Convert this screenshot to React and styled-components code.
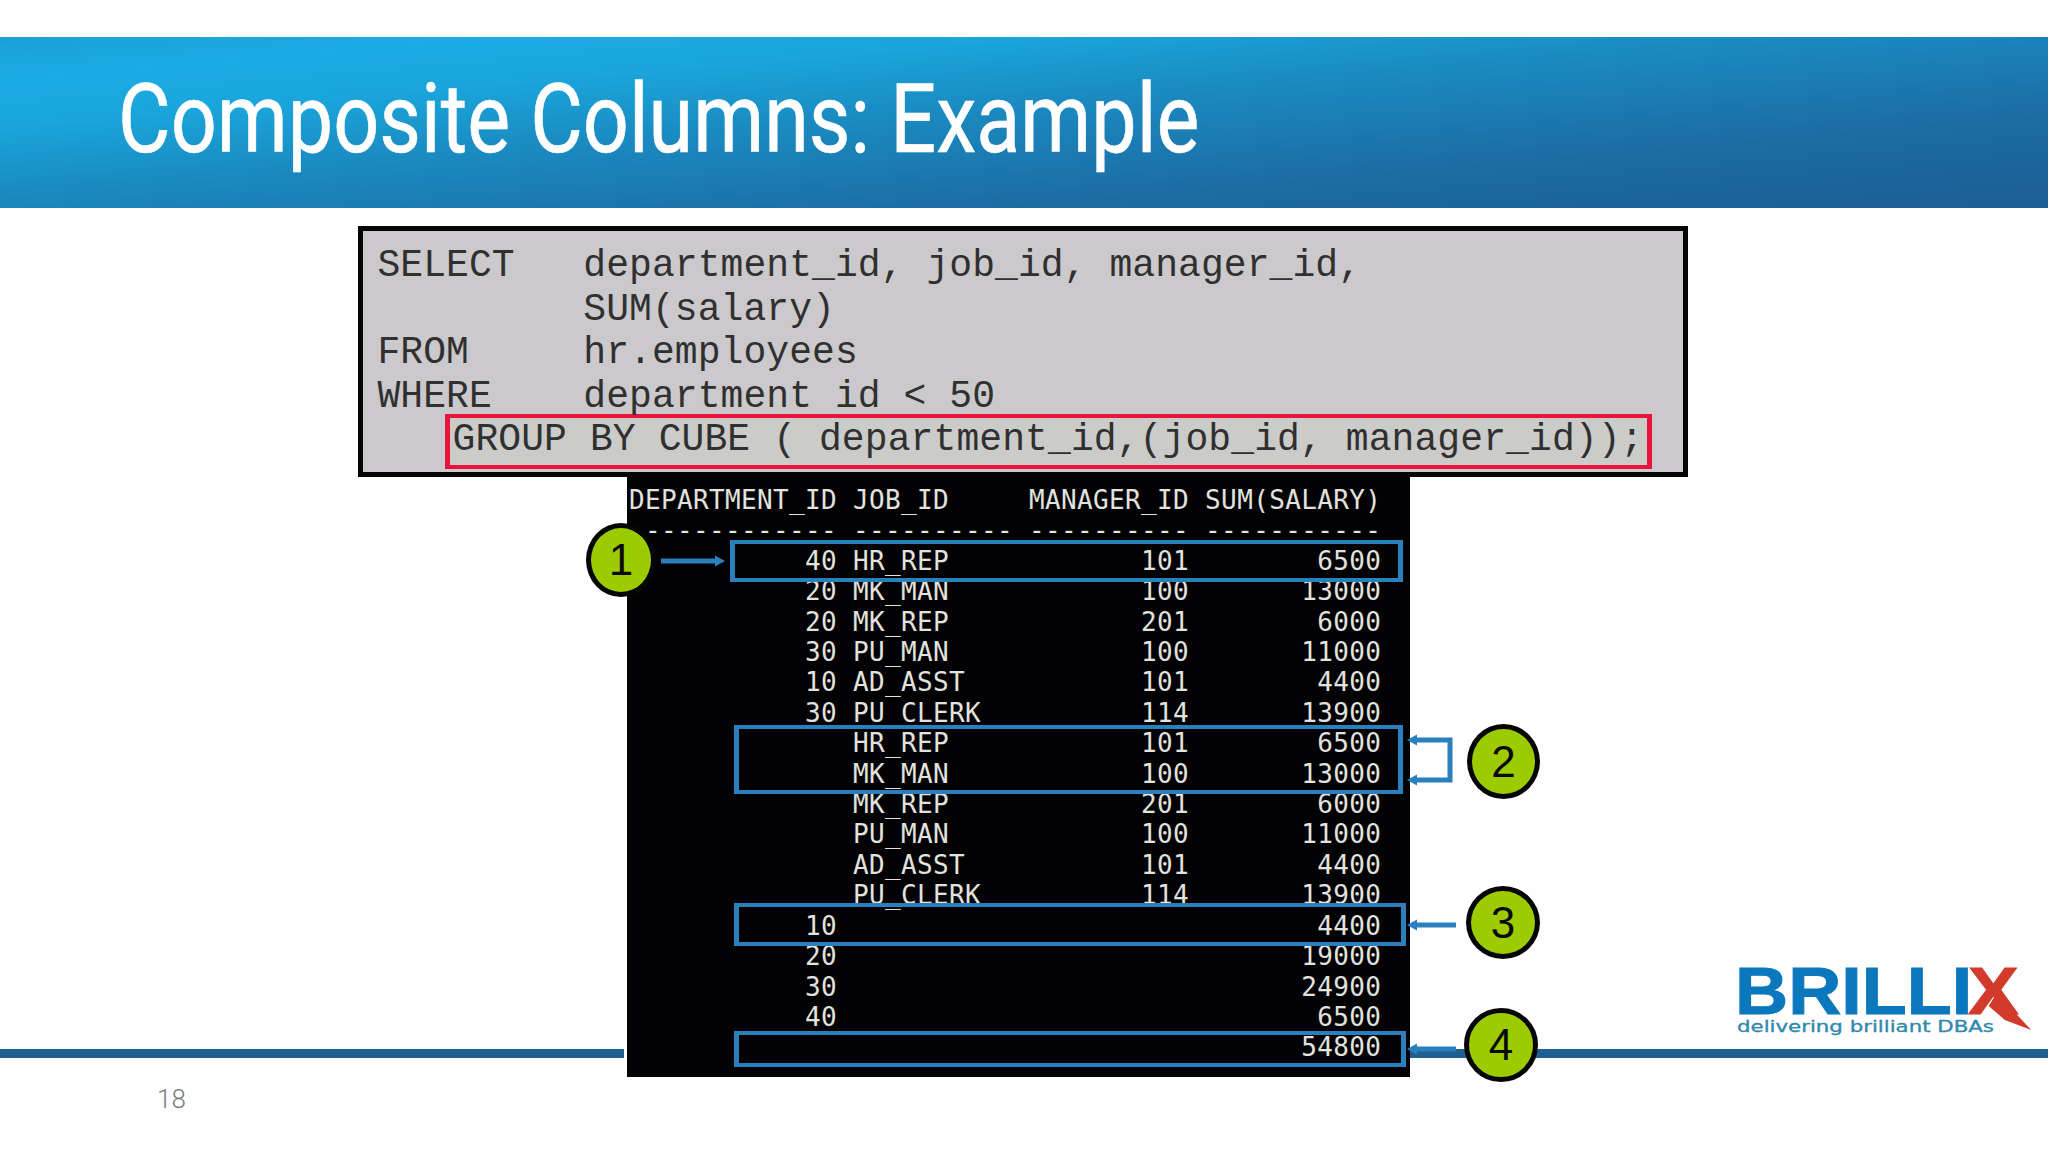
import React from "react";
import styled, { createGlobalStyle } from "styled-components";

const Global = createGlobalStyle`
  html, body { margin: 0; padding: 0; background: #fff; }
`;

const Slide = styled.div`
  width: 2048px;
  height: 1152px;
  overflow: hidden;
  background: #fefefe;
  padding-top: 37px;
  box-sizing: border-box;
`;

const TitleBar = styled.header`
  height: 171px;
  box-sizing: border-box;
  display: flex;
  align-items: center;
  padding: 0 0 7px 118px;
  background: linear-gradient(175deg, #1ba0d8 0%, #1aabe2 12%, #1aa6dc 25%, #1a8ac0 45%, #1c6ca3 74%, #1b5e94 100%);
`;

const Title = styled.h1`
  margin: 0;
  color: #fff;
  font: 400 97px/1 Roboto, sans-serif;
  white-space: nowrap;
  transform: scaleX(0.834);
  transform-origin: left center;
  -webkit-text-stroke: 0.6px #fff;
`;

const Query = styled.section`
  width: 1330px;
  height: 251px;
  box-sizing: border-box;
  margin: 18px 0 0 358px;
  padding: 13px 0 0 14.5px;
  border: 5px solid #050505;
  background: #cbc9cc;
  color: #303030;
  font: 400 38px/43.5px "Liberation Mono", monospace;
  letter-spacing: 0.07px;
`;

const CodeLines = styled.pre`
  margin: 0;
  font: inherit;
`;

const GroupBy = styled.pre`
  margin: -4px 0 0 67px;
  width: 1207px;
  height: 55px;
  box-sizing: border-box;
  padding-left: 3px;
  border-style: solid;
  border-width: 4px 5px;
  border-color: #e9143c;
  background: #cbcbc9;
  font: inherit;
  letter-spacing: 0.1px;
  line-height: 43px;
`;

const Lower = styled.div`
  display: grid;
  grid-template-columns: 627px 783px 1fr;
`;

const Terminal = styled.section`
  grid-column: 2;
  position: relative;
  z-index: 1;
  height: 600px;
  background: #020204;
  box-shadow: -3px 0 0 #fefefe;
`;

const Output = styled.pre`
  margin: 0;
  width: fit-content;
  padding: 8px 0 0 2px;
  color: #e2e2df;
  font: 400 26px/30.4px "DejaVu Sans Mono", monospace;
  letter-spacing: 0.35px;
`;

const Frame = styled.div`
  position: absolute;
  left: ${(p) => p.$left}px;
  top: ${(p) => p.$top}px;
  width: ${(p) => p.$w}px;
  height: ${(p) => p.$h}px;
  box-sizing: border-box;
  border-style: solid;
  border-width: 4px 5px;
  border-color: #2a7fbd;
`;

const Arrows = styled.svg`
  position: absolute;
  inset: 0;
  width: 100%;
  height: 100%;
  overflow: visible;
  pointer-events: none;
`;

const Badge = styled.div`
  position: absolute;
  left: ${(p) => p.$left}px;
  top: ${(p) => p.$top}px;
  width: ${(p) => p.$w}px;
  height: ${(p) => p.$h}px;
  box-sizing: border-box;
  display: flex;
  align-items: center;
  justify-content: center;
  border: 5px solid #060606;
  border-radius: 50%;
  background: #9ccc00;
  color: #0a0a0a;
  font: 400 44px/1 "Liberation Sans", Arial, sans-serif;
`;

const Logo = styled.div`
  grid-column: 3;
  align-self: end;
  margin: 0 0 42px 325px;
  width: 300px;
`;

const Wordmark = styled.div`
  display: flex;
  height: 47px;
  font: 700 66px/47px "Liberation Sans", Arial, sans-serif;
  -webkit-text-stroke: 1px currentColor;
`;

const Brilli = styled.span`
  display: inline-block;
  width: 233px;
  color: #0b78bd;
  white-space: nowrap;
  transform: scaleX(1.115);
  transform-origin: left center;
`;

const BrandX = styled.span`
  position: relative;
  display: inline-block;
  width: 50px;
  color: #d23b2b;
  transform: scaleX(1.15);
  transform-origin: left center;
`;

const XTail = styled.svg`
  position: absolute;
  left: 0;
  top: 0;
  width: 56px;
  height: 63px;
  overflow: visible;
`;

const Tagline = styled.div`
  margin: 5px 0 0 2px;
  color: #2f88ad;
  font: 400 15px/15px "DejaVu Sans", sans-serif;
  white-space: nowrap;
  transform: scaleX(1.42);
  transform-origin: left center;
  -webkit-text-stroke: 0.3px currentColor;
`;

const Rule = styled.div`
  height: 9px;
  margin-top: -28px;
  background: #1f6093;
`;

const PageNumber = styled.div`
  margin: 28px 0 0 157px;
  color: #7c7c81;
  font: 300 26px/26px Roboto, sans-serif;
`;

const terminalText = `DEPARTMENT_ID JOB_ID     MANAGER_ID SUM(SALARY)
 ------------ ---------- ---------- -----------
           40 HR_REP            101        6500
           20 MK_MAN            100       13000
           20 MK_REP            201        6000
           30 PU_MAN            100       11000
           10 AD_ASST           101        4400
           30 PU_CLERK          114       13900
              HR_REP            101        6500
              MK_MAN            100       13000
              MK_REP            201        6000
              PU_MAN            100       11000
              AD_ASST           101        4400
              PU_CLERK          114       13900
           10                              4400
           20                             19000
           30                             24900
           40                              6500
                                          54800`;

const Head = ({ x, y }) => <polygon points={`${x},${y} ${x + 10},${y - 5.5} ${x + 10},${y + 5.5}`} fill="#2a7fbd" />;

export default function App() {
  return (
    <>
      <Global />
      <Slide>
        <TitleBar>
          <Title>Composite Columns: Example</Title>
        </TitleBar>
        <Query>
          <CodeLines>{`SELECT   department_id, job_id, manager_id,
         SUM(salary)
FROM     hr.employees
WHERE    department id < 50`}</CodeLines>
          <GroupBy>GROUP BY CUBE ( department_id,(job_id, manager_id));</GroupBy>
        </Query>
        <Lower>
          <Terminal>
            <Output>{terminalText}</Output>
            <Frame $left={103} $top={63} $w={673} $h={42} />
            <Frame $left={107} $top={248} $w={669} $h={69} />
            <Frame $left={107} $top={426} $w={672} $h={43} />
            <Frame $left={107} $top={554} $w={672} $h={36} />
            <Arrows viewBox="0 0 783 600">
              <g fill="none" stroke="#2a7fbd" strokeWidth="5">
                <path d="M34 84H92" />
                <path d="M787 263H823V303H787" />
                <path d="M787 448H829" />
                <path d="M787 572H829" />
              </g>
              <polygon points="98,84 88,78.5 88,89.5" fill="#2a7fbd" />
              <Head x={780} y={263} />
              <Head x={780} y={303} />
              <Head x={780} y={448} />
              <Head x={780} y={572} />
            </Arrows>
            <Badge $left={-41} $top={46} $w={70} $h={74}>1</Badge>
            <Badge $left={840} $top={247} $w={73} $h={75}>2</Badge>
            <Badge $left={839} $top={409} $w={74} $h={73}>3</Badge>
            <Badge $left={837} $top={531} $w={74} $h={74}>4</Badge>
          </Terminal>
          <Logo>
            <Wordmark>
              <Brilli>BRILLI</Brilli>
              <BrandX>
                X
                <XTail viewBox="0 0 56 63">
                  <polygon points="25,25 55,62 32,52 18,38" fill="#d23b2b" />
                </XTail>
              </BrandX>
            </Wordmark>
            <Tagline>delivering brilliant DBAs</Tagline>
          </Logo>
        </Lower>
        <Rule />
        <PageNumber>18</PageNumber>
      </Slide>
    </>
  );
}
